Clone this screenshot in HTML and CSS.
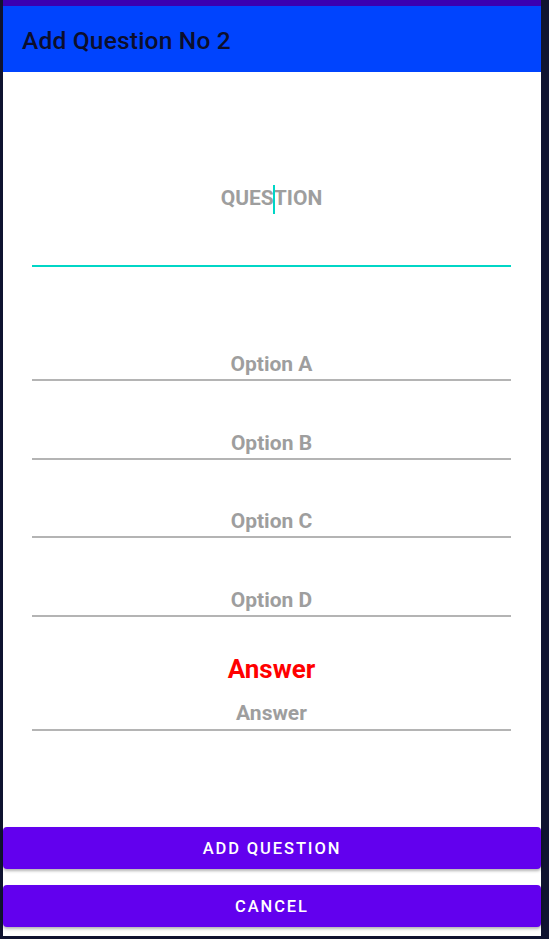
FILE: index.html
```html
<!DOCTYPE html>
<html>
<head>
<meta charset="utf-8">
<link rel="stylesheet" href="styles.css">
</head>
<body>
<div class="phone">
  <div class="status"></div>
  <div class="appbar"><span class="title">Add Question No 2</span></div>
  <div class="content">
    <div class="field field-q">
      <div class="hint"><span>QUES</span><span class="cursor"></span><span>TION</span></div>
    </div>
    <div class="field opt"><div class="hint">Option A</div></div>
    <div class="field opt"><div class="hint">Option B</div></div>
    <div class="field opt"><div class="hint">Option C</div></div>
    <div class="field opt"><div class="hint">Option D</div></div>
    <div class="answer-label">Answer</div>
    <div class="field ans"><div class="hint">Answer</div></div>
    <div class="buttons">
      <button class="btn">ADD QUESTION</button>
      <button class="btn">CANCEL</button>
    </div>
  </div>
</div>
</body>
</html>
```

FILE: styles.css
```css
html, body {
  margin: 0;
  padding: 0;
  background: #0f1330;
  height: 939px;
  overflow: hidden;
}
body {
  font-family: Roboto, "Liberation Sans", sans-serif;
}
.phone {
  margin-left: 3px;
  width: 538px;
  height: 936px;
  display: flex;
  flex-direction: column;
  background: #ffffff;
}
.status {
  height: 6px;
  background: #3a00b2;
}
.appbar {
  height: 66px;
  background: #0044fe;
  display: flex;
  align-items: center;
  padding-left: 19px;
}
.title {
  font-size: 24.5px;
  font-weight: 500;
  color: #0c0e2c;
  letter-spacing: 0.2px;
  margin-top: 2px;
}
.content {
  flex: 1;
  display: flex;
  flex-direction: column;
  padding: 0 30px 9px 29px;
}
.field {
  border-bottom: 2px solid #b4b4b4;
  text-align: center;
}
.hint {
  font-size: 21px;
  font-weight: 700;
  color: #9e9e9e;
  line-height: 24px;
  height: 24px;
}
.field-q {
  padding-top: 114px;
  height: 79px;
  border-bottom-color: #00d6c6;
}
.field-q .hint {
  display: flex;
  justify-content: center;
  align-items: center;
}
.cursor {
  display: inline-block;
  width: 2px;
  height: 29px;
  background: #00d6c6;
  margin: 0 -1px;
  position: relative;
  top: 1px;
}
.opt {
  margin-top: 85px;
  padding-bottom: 3px;
}
.opt + .opt {
  margin-top: 49.5px;
}
.answer-label {
  margin-top: 37px;
  text-align: center;
  color: #ff0000;
  font-size: 26px;
  font-weight: 700;
  line-height: 30px;
}
.ans {
  margin-top: 17px;
  padding-bottom: 4px;
}
.buttons {
  margin-top: auto;
  margin-left: -29px;
  margin-right: -30px;
  display: flex;
  flex-direction: column;
  gap: 16px;
}
.btn {
  height: 42px;
  border: none;
  border-radius: 4px;
  background: #6200ee;
  color: #ffffff;
  font-family: Roboto, "Liberation Sans", sans-serif;
  font-size: 16.5px;
  font-weight: 500;
  letter-spacing: 1.9px;
  box-shadow: 0 2px 3px rgba(0, 0, 0, 0.3);
  padding: 0;
}
```
